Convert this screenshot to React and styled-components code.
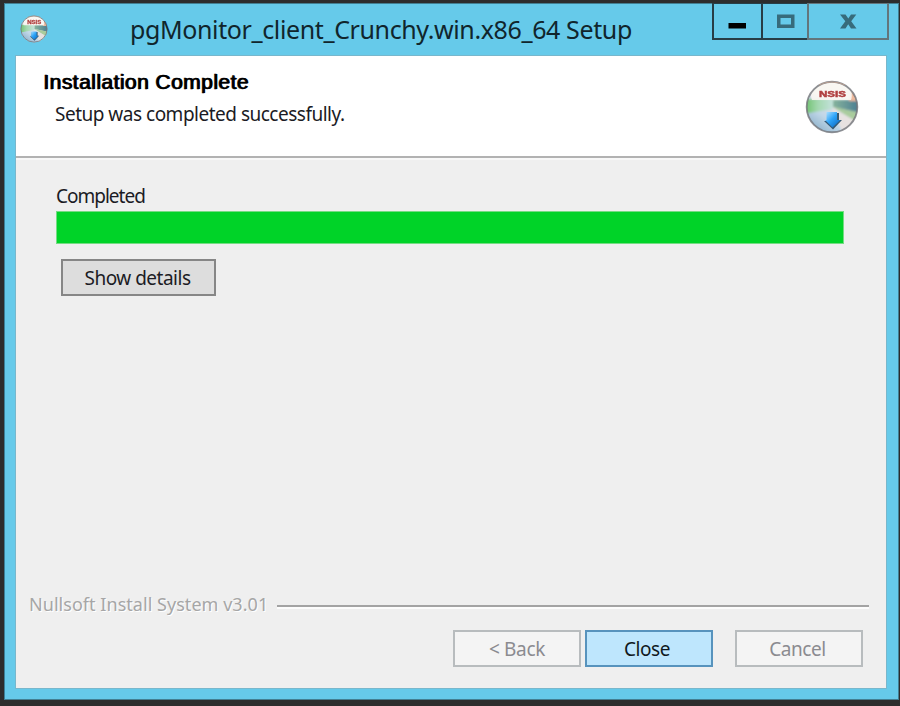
import React from "react";
import styled, { createGlobalStyle } from "styled-components";

const Global = createGlobalStyle`
  * { box-sizing: border-box; }
  body { margin: 0; background: #2d2d2d; }
`;

const Desktop = styled.div`
  width: 900px;
  height: 706px;
  padding: 3px 1px 6px 4px;
  background: #2d2d2d;
  overflow: hidden;
  font-family: "Noto Sans", sans-serif;
`;

const Window = styled.div`
  height: 697px;
  display: flex;
  flex-direction: column;
  background: #66caea;
  border: 1px solid #437f92;
  border-left-color: #3c8199;
  padding: 0 12px 11px 11px;
`;

const TitleBar = styled.header`
  height: 52px;
  flex: none;
  display: flex;
  align-items: flex-start;
  margin-right: -3px;
`;

const AppIcon = styled.div`
  margin: 11px 0 0 4px;
  width: 28px;
  height: 28px;
`;

const Title = styled.h1`
  margin: 8px 0 0 82px;
  flex: 1;
  font-size: 25px;
  line-height: 34px;
  font-weight: 400;
  color: #10252c;
  white-space: nowrap;
  letter-spacing: ${(p) => p.$spacing}px;
`;

const Controls = styled.div`
  display: flex;
  height: 37px;
  margin-top: -1px;
`;

const Control = styled.button`
  width: ${(p) => p.$width}px;
  height: 37px;
  padding: 0;
  border: solid ${(p) => (p.$muted ? "#63757c" : "#273d46")};
  border-width: 1px ${(p) => (p.$last ? 2 : 0)}px 2px 2px;
  background: transparent;
  display: flex;
  justify-content: center;
`;

const Client = styled.main`
  flex: 1;
  display: flex;
  flex-direction: column;
  background: #efefef;
  box-shadow: 0 0 0 1px #78b7cc;
`;

const Banner = styled.section`
  height: 102px;
  display: flex;
  justify-content: space-between;
  background: #fff;
  border-bottom: 2px solid #b2b2b2;
  box-shadow: 0 2px 0 #f8f8f8;
  padding: 0 27px;
`;

const Heading = styled.h2`
  margin: 14px 0 0;
  font: 400 21px/24px "Liberation Sans", sans-serif;
  letter-spacing: ${(p) => p.$spacing}px;
  color: #000;
  text-shadow: 1px 0 0 #000;
  -webkit-text-stroke: 0.35px #000;
  white-space: nowrap;
`;

const Label = styled.p`
  margin: ${(p) => p.$margin || "0"};
  font-size: 19px;
  line-height: 26px;
  letter-spacing: ${(p) => p.$spacing}px;
  white-space: nowrap;
  color: #1b1b24;
`;

const DiscHolder = styled.div`
  margin-top: 24px;
  width: 54px;
  height: 54px;
`;

const Body = styled.section`
  flex: 1;
  padding: 25px 42px 0 40px;
`;

const Progress = styled.div`
  height: 33px;
  margin-top: 2px;
  border: 1px solid #75dc83;
  background: #00d328;
`;

const Button = styled.button`
  width: ${(p) => p.$width}px;
  height: 37px;
  padding: ${(p) => p.$padding || "1px 0 0"};
  font: 400 19px/26px "Noto Sans", sans-serif;
  letter-spacing: ${(p) => p.$spacing}px;
  color: ${(p) => p.$color};
  background: ${(p) => p.$bg};
  border: 2px solid ${(p) => p.$border};
  margin: ${(p) => p.$margin || "0"};
`;

const Branding = styled.div`
  display: flex;
  align-items: center;
  gap: 9px;
  padding: 0 17px 0 13px;
  height: 26px;
`;

const BrandText = styled.span`
  font-size: 18px;
  line-height: 26px;
  letter-spacing: ${(p) => p.$spacing}px;
  color: #a6a6a6;
  text-shadow: 1px 1px 0 #fff;
  white-space: nowrap;
`;

const Rule = styled.div`
  flex: 1;
  height: 4px;
  margin-top: 5px;
  border-top: 2px solid #a3a3a3;
  border-bottom: 2px solid #fcfcfc;
`;

const Footer = styled.footer`
  display: flex;
  justify-content: flex-end;
  padding: 13px 23px 21px;
`;

function Disc({ size }) {
  const id = "disc" + size;
  return (
    <svg width={size} height={size} viewBox="0 0 54 54" display="block">
      <defs>
        <clipPath id={id + "c"}><circle cx="27" cy="27" r="25.5" /></clipPath>
        <linearGradient id={id + "g"} x1="0" x2="1">
          <stop offset="0" stopColor="#65bd62" />
          <stop offset=".5" stopColor="#a4d8b0" />
          <stop offset="1" stopColor="#c4e2dc" />
        </linearGradient>
        <linearGradient id={id + "b"} x1="0" y1="1" x2="1" y2="0">
          <stop offset="0" stopColor="#719dba" />
          <stop offset=".4" stopColor="#c1d7e8" />
          <stop offset=".65" stopColor="#e1e0e3" />
          <stop offset="1" stopColor="#8fb193" />
        </linearGradient>
        <linearGradient id={id + "t"} x1="0" x2="1">
          <stop offset="0" stopColor="#86b39c" />
          <stop offset="1" stopColor="#467991" />
        </linearGradient>
        <linearGradient id={id + "a"} x1="0" y1="0" x2="1" y2="1">
          <stop offset="0" stopColor="#b7e5ff" />
          <stop offset=".45" stopColor="#2ca3f8" />
          <stop offset="1" stopColor="#075fb9" />
        </linearGradient>
        <filter id={id + "f"} x="-20%" y="-20%" width="140%" height="140%"><feGaussianBlur stdDeviation="1.2" /></filter>
        <filter id={id + "s"}><feGaussianBlur stdDeviation=".5" /></filter>
      </defs>
      <g clipPath={`url(#${id}c)`}>
        <rect width="54" height="54" fill="#edf0ea" />
        <g filter={`url(#${id}f)`}>
          <path d="M0 14H9L27 25H54V54H0Z" fill={`url(#${id}b)`} />
          <path d="M-2 19H28V29L-2 34Z" fill={`url(#${id}g)`} />
          <path d="M28 20H56V33L28 27Z" fill={`url(#${id}t)`} />
          <path d="M28 27L56 33V45Z" fill="#a9cc9d" />
          <path d="M27 28L56 44V54H38Z" fill="#e7e2e1" />
          <path d="M5 9L20 0H7L-1 18Z" fill="#91c69a" />
          <path d="M48 9L56 21H44Z" fill="#efba9d" />
        </g>
        <path d="M7 20Q3 10 15 5Q27-1 40 5Q49 11 46 20Z" fill="#faf7f3" opacity=".88" />
      </g>
      <circle cx="27" cy="27" r="25.3" fill="none" stroke="#74767b" strokeWidth="1.9" opacity=".8" filter={`url(#${id}s)`} />
      <path d="M14 5Q26-1 40 5" fill="none" stroke="#b89f91" strokeWidth="1" />
      <text x="27.5" y="17" textAnchor="middle" fontFamily="Liberation Sans, sans-serif" fontSize="9.3" fontWeight="700" fill="#b04040" stroke="#b04040" strokeWidth=".5" textLength="27" lengthAdjust="spacingAndGlyphs" filter={`url(#${id}s)`}>NSIS</text>
      <path d="M22 33H34V40H37L28 49.5L19 41H22Z" fill="#284d68" opacity=".9" filter={`url(#${id}s)`} />
      <path d="M21.5 32H32V40H35.5L27.5 47.5L20 40H21.5Z" fill={`url(#${id}a)`} />
    </svg>
  );
}

export default function App() {
  return (
    <>
      <Global />
      <Desktop>
        <Window>
          <TitleBar>
            <AppIcon><Disc size={28} /></AppIcon>
            <Title $spacing={-0.38}>pgMonitor_client_Crunchy.win.x86_64 Setup</Title>
            <Controls>
              <Control $width={49} aria-label="Minimize">
                <svg width="47" height="34"><path d="M14.5 19H32V24.5H14.5Z" fill="#000" /></svg>
              </Control>
              <Control $width={46} aria-label="Maximize">
                <svg width="44" height="34"><path d="M15.75 12.25H29.75V22.25H15.75Z" fill="none" stroke="#376b7b" strokeWidth="3.5" /></svg>
              </Control>
              <Control $width={82} $muted $last aria-label="Close window">
                <svg width="78" height="34"><path d="M31 10.5H36.5L39.3 14.5L42 10.5H47.3L42.2 17.3L47.5 24.5H42L39.2 20.3L36.5 24.5H31L36.3 17.3Z" fill="#376b7b" /></svg>
              </Control>
            </Controls>
          </TitleBar>
          <Client>
            <Banner>
              <div>
                <Heading $spacing={0.45}>Installation Complete</Heading>
                <Label $margin="7px 0 0 12px" $spacing={-0.5}>Setup was completed successfully.</Label>
              </div>
              <DiscHolder><Disc size={54} /></DiscHolder>
            </Banner>
            <Body>
              <Label $spacing={-1}>Completed</Label>
              <Progress role="progressbar" aria-valuenow={100} />
              <Button $width={155} $padding="1px 2px 0 0" $margin="15px 0 0 5px" $spacing={-0.5} $color="#1b1b24" $bg="#dddddd" $border="#868686">Show details</Button>
            </Body>
            <Branding>
              <BrandText $spacing={0.04}>Nullsoft Install System v3.01</BrandText>
              <Rule />
            </Branding>
            <Footer>
              <Button disabled $width={128} $spacing={-0.35} $color="#8b8b90" $bg="#f4f4f4" $border="#b8bcbe">&lt; Back</Button>
              <Button $width={128} $padding="1px 4px 0 0" $margin="0 0 0 4px" $spacing={-0.4} $color="#101820" $bg="#bee6fd" $border="#5793bd">Close</Button>
              <Button disabled $width={128} $padding="1px 3px 0 0" $margin="0 0 0 22px" $spacing={-0.4} $color="#8b8b90" $bg="#f4f4f4" $border="#b8bcbe">Cancel</Button>
            </Footer>
          </Client>
        </Window>
      </Desktop>
    </>
  );
}
